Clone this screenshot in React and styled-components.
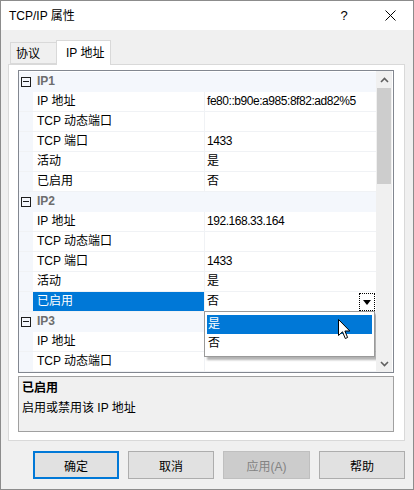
import React from 'react';
import styled, { createGlobalStyle } from 'styled-components';

const GlobalStyle = createGlobalStyle`
  html, body {
    margin: 0;
    padding: 0;
    background: #f0f0f0;
  }
  * {
    box-sizing: border-box;
  }
  body {
    font-family: "Liberation Sans", "Noto Sans CJK SC", sans-serif;
    font-size: 12px;
    color: #000;
  }
`;

const Window = styled.div`
  width: 414px;
  height: 490px;
  border: 1px solid #8c8c8c;
  background: #f0f0f0;
  display: flex;
  flex-direction: column;
`;

const TitleBar = styled.div`
  height: 29px;
  background: #fff;
  display: flex;
  align-items: center;
  padding-left: 8px;
  font-size: 12px;
  line-height: 16px;
`;

const Title = styled.div`
  flex: 1;
`;

const TitleButton = styled.div`
  width: ${(p) => p.$w}px;
  height: 29px;
  display: flex;
  align-items: center;
  justify-content: center;
  font-size: 13px;
`;

const Body = styled.div`
  flex: 1;
  display: flex;
  flex-direction: column;
  padding: 10px 8px 0 7px;
`;

const TabStrip = styled.div`
  display: flex;
  align-items: flex-end;
  height: 24px;
  padding-left: 2px;
  position: relative;
  z-index: 1;
`;

const Tab = styled.div`
  height: ${(p) => (p.$active ? 25 : 22)}px;
  width: ${(p) => p.$w}px;
  margin-bottom: ${(p) => (p.$active ? -1 : 0)}px;
  margin-left: ${(p) => (p.$active ? -1 : 0)}px;
  border: 1px solid #d9d9d9;
  border-bottom: ${(p) => (p.$active ? 'none' : '1px solid #d9d9d9')};
  background: ${(p) => (p.$active ? '#fff' : '#f0f0f0')};
  display: flex;
  align-items: center;
  padding-left: ${(p) => (p.$active ? 9 : 5)}px;
  padding-top: ${(p) => (p.$active ? 0 : 2)}px;
  font-size: 12px;
  line-height: 16px;
`;

const Panel = styled.div`
  height: 377px;
  border: 1px solid #d9d9d9;
  background: #fff;
  padding: 5px 10px 0 9px;
  display: flex;
  flex-direction: column;
`;

const Grid = styled.div`
  height: 303px;
  border: 1px solid #828790;
  display: flex;
  background: #fff;
`;

const Rows = styled.div`
  width: 357px;
  padding-top: 1px;
  overflow: hidden;
  position: relative;
`;

const Row = styled.div`
  height: 20px;
  display: flex;
  background: ${(p) => (p.$header ? '#f4f7fc' : '#fff')};
  border-bottom: 1px solid ${(p) => (p.$header ? '#f4f7fc' : '#f0f2f5')};
  line-height: 19px;
  position: relative;
`;

const Margin = styled.div`
  width: 14px;
  flex: none;
  background: #f4f7fc;
  display: flex;
  align-items: center;
  padding-left: 2px;
`;

const Toggle = styled.div`
  width: 10px;
  height: 10px;
  border: 1px solid #1e1e1e;
  display: flex;
  align-items: center;
  justify-content: center;
  &::after {
    content: '';
    width: 6px;
    height: 1px;
    background: #1e1e1e;
  }
`;

const HeaderText = styled.div`
  padding-left: 4px;
  font-weight: bold;
  color: #6d6d6d;
`;

const NameCell = styled.div`
  width: 171px;
  flex: none;
  padding-left: 4px;
  background: ${(p) => (p.$selected ? '#0078d7' : '#fff')};
  color: ${(p) => (p.$selected ? '#fff' : '#000')};
  white-space: nowrap;
`;

const ValueCell = styled.div`
  flex: 1;
  border-left: 1px solid #f0f2f5;
  padding-left: 2px;
  display: flex;
  align-items: center;
  white-space: nowrap;
  position: relative;
`;

const ValueText = styled.div`
  flex: 1;
  letter-spacing: -0.45px;
`;

const DropButton = styled.div`
  width: 16px;
  height: 18px;
  margin-right: 1px;
  margin-top: 1px;
  border: 1px dotted #000;
  display: flex;
  align-items: center;
  justify-content: center;
`;

const DropList = styled.div`
  position: absolute;
  left: -1px;
  top: 19px;
  width: 171px;
  height: 46px;
  background: #fff;
  border: 1px solid #9a9a9a;
  box-shadow: 3px 3px 2px rgba(0, 0, 0, 0.3);
  padding: 3px 2px;
  z-index: 2;
`;

const DropItem = styled.div`
  height: 19px;
  line-height: 19px;
  padding-left: 1px;
  background: ${(p) => (p.$active ? '#0078d7' : '#fff')};
  color: ${(p) => (p.$active ? '#fff' : '#000')};
`;

const Cursor = styled.svg`
  position: absolute;
  left: 133px;
  top: 7px;
`;

const Scrollbar = styled.div`
  width: 16px;
  background: #f0f0f0;
  display: flex;
  flex-direction: column;
`;

const ScrollArrow = styled.div`
  height: 17px;
  display: flex;
  align-items: center;
  justify-content: center;
`;

const Thumb = styled.div`
  height: 96px;
  margin: 0 1px;
  background: #cdcdcd;
`;

const Track = styled.div`
  flex: 1;
`;

const Description = styled.div`
  margin-top: 3px;
  height: 56px;
  border: 1px solid #a0a0a0;
  background: #f0f0f0;
  padding: 1px 3px;
  line-height: 20px;
`;

const DescTitle = styled.div`
  font-weight: bold;
`;

const ButtonBar = styled.div`
  display: flex;
  justify-content: flex-end;
  gap: 9px;
  margin-top: 10px;
`;

const Button = styled.div`
  width: ${(p) => p.$w || 86}px;
  height: 28px;
  display: flex;
  align-items: center;
  justify-content: center;
  background: ${(p) => (p.$disabled ? '#cccccc' : '#e1e1e1')};
  border: ${(p) => (p.$primary ? '2px solid #0078d7' : p.$disabled ? '1px solid #bfbfbf' : '1px solid #adadad')};
  color: ${(p) => (p.$disabled ? '#838383' : '#000')};
  font-size: 12px;
`;

const groups = [
  {
    name: 'IP1',
    rows: [
      ['IP 地址', 'fe80::b90e:a985:8f82:ad82%5'],
      ['TCP 动态端口', ''],
      ['TCP 端口', '1433'],
      ['活动', '是'],
      ['已启用', '否'],
    ],
  },
  {
    name: 'IP2',
    rows: [
      ['IP 地址', '192.168.33.164'],
      ['TCP 动态端口', ''],
      ['TCP 端口', '1433'],
      ['活动', '是'],
      ['已启用', '否', true],
    ],
  },
  {
    name: 'IP3',
    rows: [
      ['IP 地址', ''],
      ['TCP 动态端口', ''],
    ],
  },
];

const Chevron = ({ up }) => (
  <svg width="9" height="6" viewBox="0 0 9 6">
    <path
      d={up ? 'M1 5 L4.5 1.5 L8 5' : 'M1 1 L4.5 4.5 L8 1'}
      fill="none"
      stroke="#606060"
      strokeWidth="1.6"
    />
  </svg>
);

const PropertyRow = ({ name, value, selected }) => (
  <Row>
    <Margin />
    <NameCell $selected={selected}>{name}</NameCell>
    <ValueCell>
      <ValueText>{value}</ValueText>
      {selected && (
        <>
          <DropButton>
            <svg width="8" height="5" viewBox="0 0 8 5">
              <path d="M0 0 H8 L4 5 Z" fill="#000" />
            </svg>
          </DropButton>
          <DropList>
            <DropItem $active>是</DropItem>
            <DropItem>否</DropItem>
            <Cursor width="13" height="21" viewBox="0 0 13 21">
              <path
                d="M0.5 0.5 L0.5 16.5 L4.5 12.8 L7.3 19.5 L9.6 18.5 L6.9 12 L11.8 12 Z"
                fill="#fff"
                stroke="#000"
                strokeWidth="1"
              />
            </Cursor>
          </DropList>
        </>
      )}
    </ValueCell>
  </Row>
);

export default function App() {
  return (
    <>
      <GlobalStyle />
      <Window>
        <TitleBar>
          <Title>TCP/IP 属性</Title>
          <TitleButton $w={46}>?</TitleButton>
          <TitleButton $w={46}>
            <svg width="11" height="11" viewBox="0 0 11 11">
              <path d="M0.5 0.5 L10.5 10.5 M10.5 0.5 L0.5 10.5" stroke="#000" strokeWidth="1" />
            </svg>
          </TitleButton>
        </TitleBar>
        <Body>
          <TabStrip>
            <Tab $w={47}>协议</Tab>
            <Tab $w={55} $active>
              IP 地址
            </Tab>
          </TabStrip>
          <Panel>
            <Grid>
              <Rows>
                {groups.map((g) => (
                  <React.Fragment key={g.name}>
                    <Row $header>
                      <Margin>
                        <Toggle />
                      </Margin>
                      <HeaderText>{g.name}</HeaderText>
                    </Row>
                    {g.rows.map(([n, v, sel], i) => (
                      <PropertyRow key={i} name={n} value={v} selected={sel} />
                    ))}
                  </React.Fragment>
                ))}
              </Rows>
              <Scrollbar>
                <ScrollArrow>
                  <Chevron up />
                </ScrollArrow>
                <Thumb />
                <Track />
                <ScrollArrow>
                  <Chevron />
                </ScrollArrow>
              </Scrollbar>
            </Grid>
            <Description>
              <DescTitle>已启用</DescTitle>
              <div>启用或禁用该 IP 地址</div>
            </Description>
          </Panel>
          <ButtonBar>
            <Button $primary>确定</Button>
            <Button>取消</Button>
            <Button $disabled $w={87}>
              应用(A)
            </Button>
            <Button>帮助</Button>
          </ButtonBar>
        </Body>
      </Window>
    </>
  );
}
